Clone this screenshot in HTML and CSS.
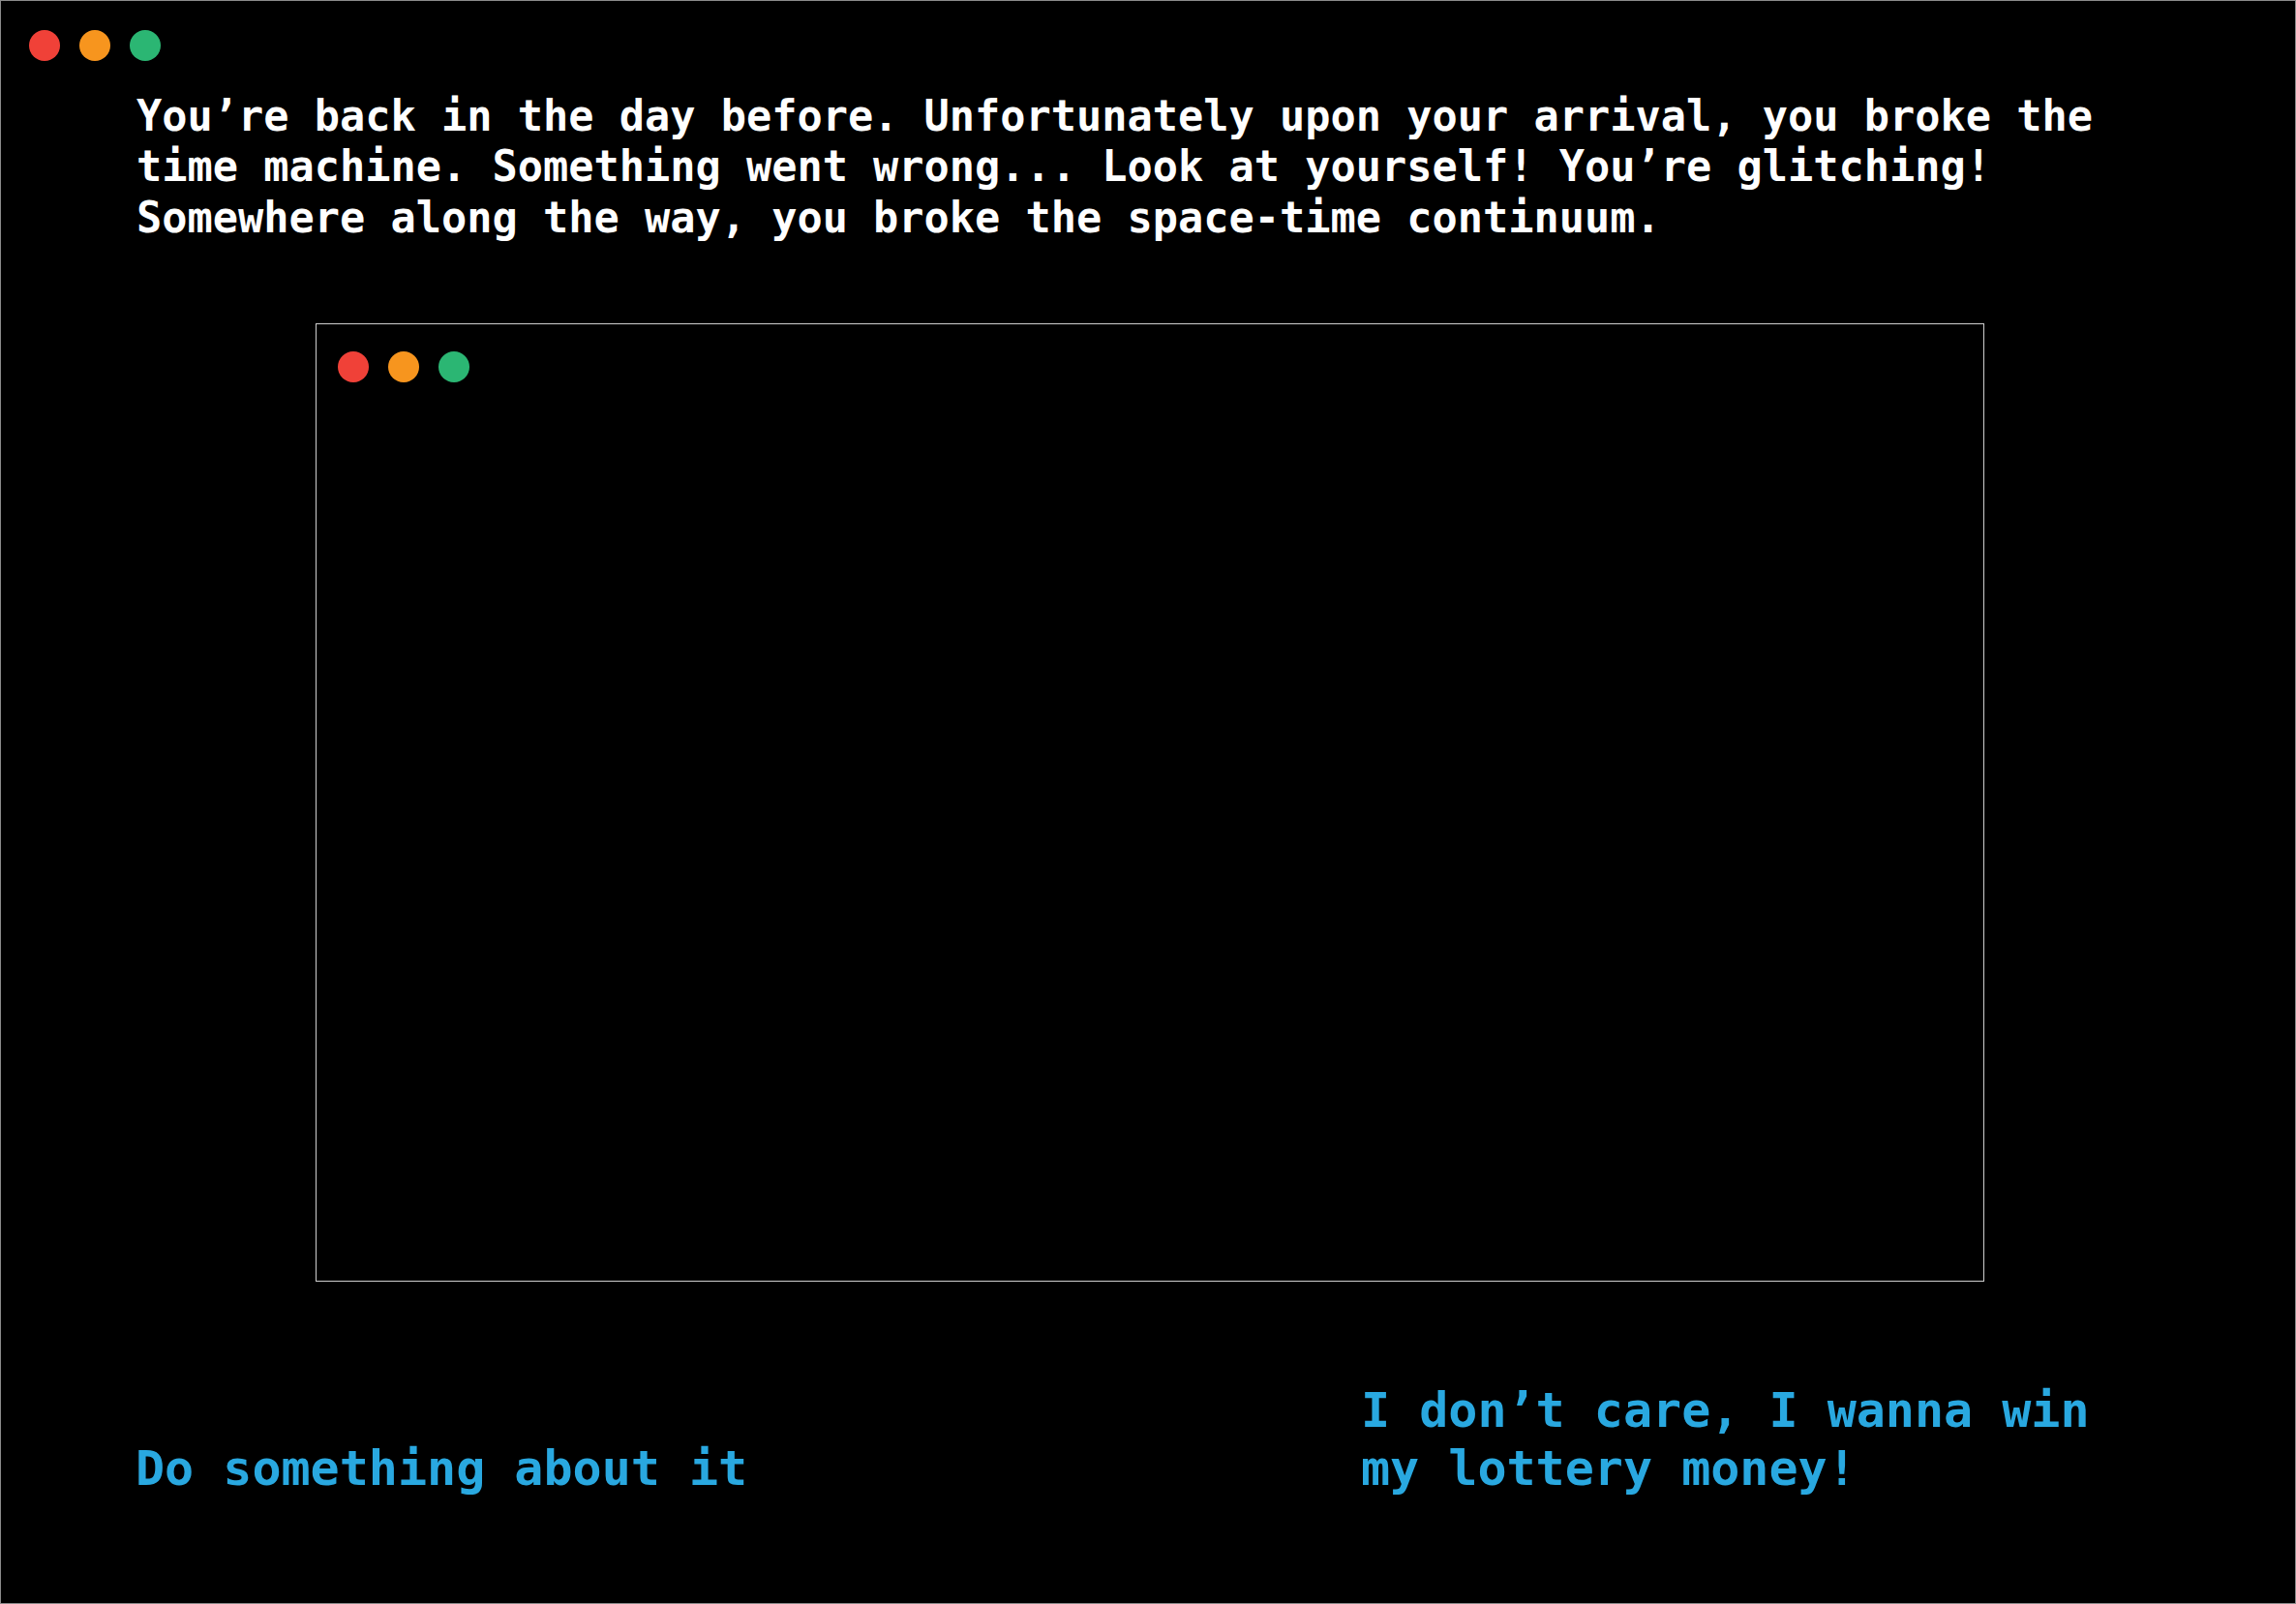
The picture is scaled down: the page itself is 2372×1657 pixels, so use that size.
FILE: index.html
```html
<!DOCTYPE html>
<html lang="en">
<head>
<meta charset="utf-8">
<title>Time machine</title>
<link rel="stylesheet" href="styles.css">
</head>
<body>
<div class="screen">
  <div class="titlebar">
    <span class="dot dot-red"></span>
    <span class="dot dot-orange"></span>
    <span class="dot dot-green"></span>
  </div>
  <p class="story">You’re back in the day before. Unfortunately upon your arrival, you broke the time machine. Something went wrong... Look at yourself! You’re glitching! Somewhere along the way, you broke the space-time continuum.</p>
  <div class="window">
    <div class="titlebar titlebar-inner">
      <span class="dot dot-red"></span>
      <span class="dot dot-orange"></span>
      <span class="dot dot-green"></span>
    </div>
  </div>
  <div class="choices">
    <a class="choice choice-left">Do something about it</a>
    <a class="choice choice-right">I don’t care, I wanna win my lottery money!</a>
  </div>
</div>
</body>
</html>
```
FILE: styles.css
```css
html, body {
  margin: 0;
  padding: 0;
  background: #000;
}

.screen {
  width: 2372px;
  height: 1657px;
  box-sizing: border-box;
  border: 1px solid #8a8a8a;
  background: #000;
  font-family: "DejaVu Sans Mono", "Liberation Mono", monospace;
  font-weight: bold;
  overflow: hidden;
}

.titlebar {
  display: flex;
  gap: 20px;
  padding: 30px 0 0 29px;
}

.dot {
  width: 32px;
  height: 32px;
  border-radius: 50%;
  display: block;
}

.dot-red { background: #f04138; }
.dot-orange { background: #f7951e; }
.dot-green { background: #2bb673; }

.story {
  margin: 31px 0 0 140px;
  width: 2080px;
  color: #fff;
  font-size: 43.6px;
  line-height: 1.2;
}

.window {
  margin: 83px 0 0 325px;
  width: 1724px;
  height: 990px;
  box-sizing: border-box;
  border: 1px solid #cfcfcf;
}

.titlebar-inner {
  padding: 28px 0 0 22px;
}

.choices {
  display: flex;
  align-items: flex-end;
  margin-top: 103px;
  padding-left: 139px;
}

.choice {
  color: #29a8e0;
  font-size: 50px;
  line-height: 1.2;
  cursor: pointer;
}

.choice-left {
  width: 1266px;
}

.choice-right {
  width: 800px;
}
```
